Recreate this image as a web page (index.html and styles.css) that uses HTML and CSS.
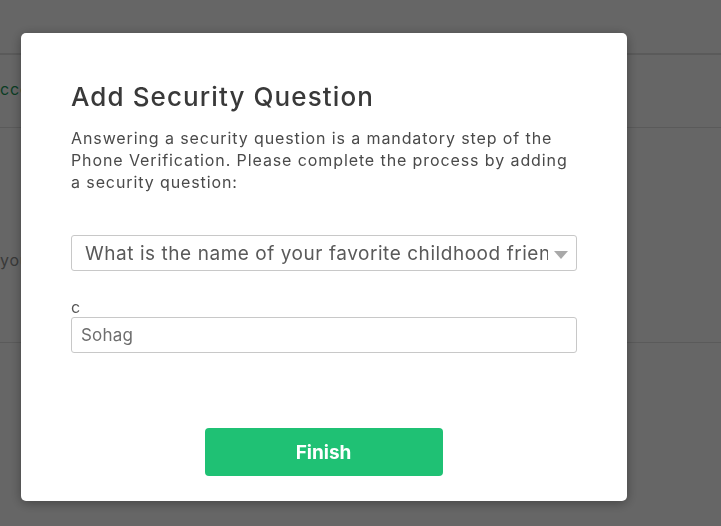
FILE: index.html
```html
<!DOCTYPE html>
<html lang="en">
<head>
<meta charset="utf-8">
<title>Add Security Question</title>
<link rel="stylesheet" href="styles.css">
</head>
<body>
<div class="page">
  <div class="row row-top"></div>
  <div class="row row-acc"><span class="acc">ccount</span></div>
  <div class="row row-mid"><span class="muted">your phone</span></div>
  <div class="row row-bottom"></div>
</div>
<div class="overlay">
  <div class="modal">
    <h1 class="title">Add Security Question</h1>
    <p class="desc">Answering a security question is a mandatory step of the Phone Verification. Please complete the process by adding a security question:</p>
    <div class="select">
      <span class="select-text">What is the name of your favorite childhood friend?</span>
      <span class="caret"></span>
    </div>
    <label class="label">c</label>
    <div class="input"><span class="placeholder">Sohag</span></div>
    <div class="actions">
      <button class="btn">Finish</button>
    </div>
  </div>
</div>
</body>
</html>
```
FILE: styles.css
```css
* { box-sizing: border-box; }
html, body { margin: 0; padding: 0; }
body {
  width: 721px;
  height: 526px;
  overflow: hidden;
  background: #ffffff;
  font-family: Inter, "Liberation Sans", sans-serif;
}
.page {
  padding-top: 53px;
}
.row {
  border-top: 1px solid #e2e2e2;
}
.row-top { height: 0; }
.row-acc {
  height: 73px;
  display: flex;
  align-items: center;
  padding-bottom: 4px;
}
.acc {
  color: #1b9a5a;
  font-size: 16px;
  letter-spacing: 0.8px;
}
.row-mid {
  height: 215px;
  display: flex;
  align-items: center;
  padding-top: 50px;
}
.muted {
  color: #8f8f8f;
  font-size: 16px;
  letter-spacing: 0.8px;
}
.row-bottom { height: 0; }

.overlay {
  position: fixed;
  inset: 0;
  background: rgba(0, 0, 0, 0.6);
}
.modal {
  position: absolute;
  left: 21px;
  top: 33px;
  width: 606px;
  height: 468px;
  background: #fff;
  border-radius: 5px;
  box-shadow: 0 2px 12px rgba(0, 0, 0, 0.35);
  padding: 44px 50px 0 50px;
  color: #3c3c3c;
}
.title {
  margin: 0;
  font-size: 26px;
  font-weight: 500;
  line-height: 40px;
  color: #393939;
  letter-spacing: 1.1px;
}
.desc {
  margin: 10px 0 0 0;
  font-size: 16px;
  line-height: 22px;
  color: #4a4a4a;
  letter-spacing: 0.9px;
}
.select {
  margin-top: 42px;
  height: 36px;
  border: 1px solid #c8c8c8;
  border-radius: 3px;
  display: flex;
  align-items: center;
  padding: 0 8px 0 13px;
  overflow: hidden;
}
.select-text {
  flex: 1;
  white-space: nowrap;
  overflow: hidden;
  font-size: 19px;
  color: #5a5a5a;
  letter-spacing: 0.55px;
}
.caret {
  width: 0;
  height: 0;
  border-left: 7px solid transparent;
  border-right: 7px solid transparent;
  border-top: 8px solid #a9a9a9;
  margin-left: 6px;
  margin-top: 3px;
}
.label {
  display: block;
  margin-top: 26px;
  font-size: 16px;
  line-height: 20px;
  color: #555;
}
.input {
  height: 36px;
  border: 1px solid #c8c8c8;
  border-radius: 3px;
  display: flex;
  align-items: center;
  padding: 0 9px;
}
.placeholder {
  font-size: 17px;
  color: #6e6e6e;
  letter-spacing: 0.2px;
}
.actions {
  display: flex;
  justify-content: center;
  margin-top: 75px;
  padding-right: 1px;
}
.btn {
  width: 238px;
  height: 48px;
  border: 0;
  border-radius: 4px;
  background: #1fc174;
  color: #fff;
  font-family: Inter, "Liberation Sans", sans-serif;
  font-size: 19px;
  font-weight: 700;
}
```
